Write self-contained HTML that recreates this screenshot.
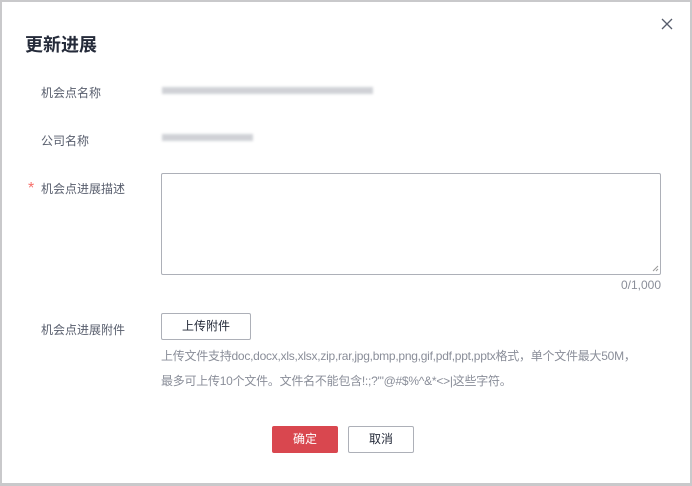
<!DOCTYPE html>
<html><head><meta charset="utf-8"><style>
*{margin:0;padding:0;box-sizing:border-box}
body{width:692px;height:486px;background:#fff;font-family:"Liberation Sans","Noto Sans CJK SC",sans-serif;position:relative;overflow:hidden}
.frame{position:absolute;left:0;top:0;width:692px;height:486px;border:2px solid #c9c9cb;border-bottom-width:3px}
.a{position:absolute;white-space:nowrap}
.lbl{font-size:12px;color:#575d6c;left:41px}
.blur{background:#c8cad0;filter:blur(1.2px);height:7px;opacity:.85}
.btn{position:absolute;height:27px;border:1px solid #adb0b8;border-radius:2px;font-size:12px;color:#252b3a;text-align:center;line-height:25px;background:#fff}
.help{font-size:12px;color:#8a8e99;left:161px;letter-spacing:-0.25px}
</style></head><body>
<div class="frame"></div>
<div class="a" style="left:25px;top:31px;font-size:18px;font-weight:bold;color:#252b3a">更新进展</div>
<svg class="a" style="left:661px;top:18px" width="12" height="12" viewBox="0 0 12 12"><path d="M1 1L11 11M11 1L1 11" stroke="#575d6c" stroke-width="1.3"/></svg>
<div class="a lbl" style="top:84px">机会点名称</div>
<div class="a blur" style="left:162px;top:87px;width:211px"></div>
<div class="a lbl" style="top:132px">公司名称</div>
<div class="a blur" style="left:162px;top:134px;width:91px"></div>
<div class="a" style="left:28px;top:180px;font-size:16px;color:#f66f6a">*</div>
<div class="a lbl" style="top:180px">机会点进展描述</div>
<div class="a" style="left:161px;top:173px;width:500px;height:102px;border:1px solid #adb0b8;border-radius:2px"></div>
<svg class="a" style="left:652px;top:265px" width="7" height="7"><path d="M1 6L6 1M4 6L6 4" stroke="#999" stroke-width="1"/></svg>
<div class="a" style="right:31px;top:278px;font-size:12px;color:#8a8e99">0/1,000</div>
<div class="a lbl" style="top:321px">机会点进展附件</div>
<div class="btn" style="left:161px;top:313px;width:90px">上传附件</div>
<div class="a help" style="top:347px">上传文件支持doc,docx,xls,xlsx,zip,rar,jpg,bmp,png,gif,pdf,ppt,pptx格式，单个文件最大50M，</div>
<div class="a help" style="top:372px">最多可上传10个文件。文件名不能包含!:;?'"@#$%^&amp;*&lt;&gt;|这些字符。</div>
<div class="btn" style="left:272px;top:426px;width:66px;background:#d9474f;border-color:#d9474f;color:#fff">确定</div>
<div class="btn" style="left:348px;top:426px;width:66px">取消</div>
</body></html>
